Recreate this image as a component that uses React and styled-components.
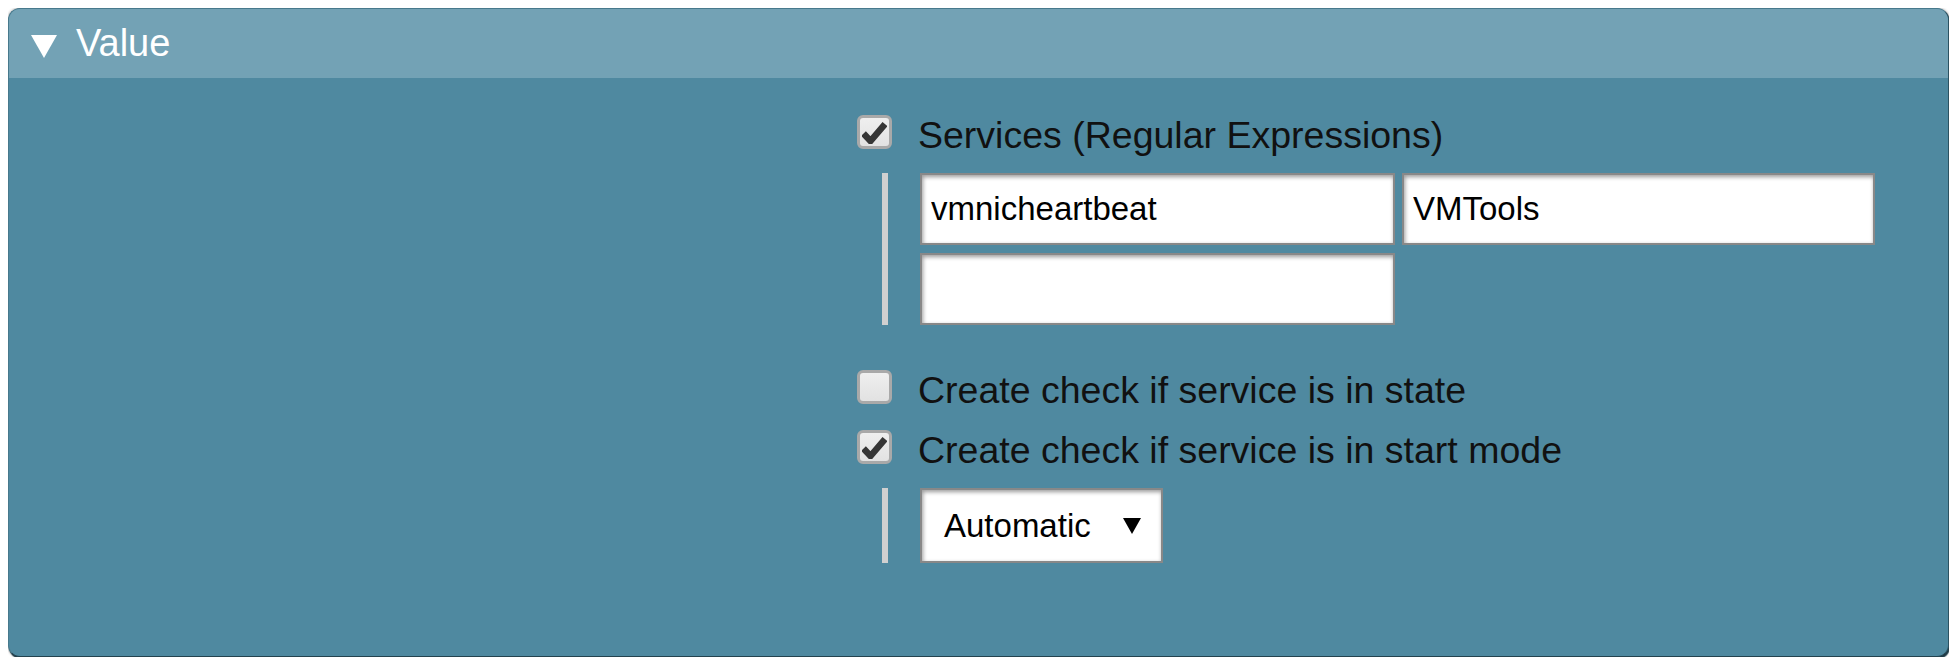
import React from "react";
import styled, { createGlobalStyle } from "styled-components";

const GlobalStyle = createGlobalStyle`
  body {
    margin: 8px;
    background: #ffffff;
    font-family: "Liberation Sans", Arial, sans-serif;
  }
`;

export default function App() {
  return (
    <>
      <GlobalStyle />
      <Panel>
        <Header>
          <svg width="26" height="23" viewBox="0 0 26 23">
            <polygon points="0,0 26,0 13,23" fill="#ffffff" />
          </svg>
          <span>Value</span>
        </Header>
        <Body>
          <Legend />
          <Options>
            <Row>
              <CheckBox checked />
              <Label>Services (Regular Expressions)</Label>
            </Row>
            <Nested>
              <InputGrid>
                <TextInput defaultValue="vmnicheartbeat" />
                <TextInput defaultValue="VMTools" />
                <TextInput defaultValue="" />
              </InputGrid>
            </Nested>

            <Row>
              <CheckBox />
              <Label>Create check if service is in state</Label>
            </Row>

            <Row>
              <CheckBox checked />
              <Label>Create check if service is in start mode</Label>
            </Row>
            <Nested>
              <Select>
                <span>Automatic</span>
                <svg width="18" height="16" viewBox="0 0 18 16">
                  <polygon points="0,0 18,0 9,16" fill="#000000" />
                </svg>
              </Select>
            </Nested>
          </Options>
        </Body>
      </Panel>
    </>
  );
}

function CheckBox({ checked }) {
  return (
    <Box>
      {checked && (
        <svg width="25" height="23" viewBox="0 0 25 23">
          <path d="M1.5 12.5 L8.5 20 L23 3" fill="none" stroke="#363636" strokeWidth="6.5" strokeLinejoin="miter" />
        </svg>
      )}
    </Box>
  );
}

const Panel = styled.section`
  border: 1px solid #47798c;
  border-right-color: #2c5261;
  border-bottom-color: #24434f;
  border-radius: 12px;
  overflow: hidden;
  background: #4f89a0;
  box-shadow: 0 0 3px rgba(0, 0, 0, 0.45), 1px 2px 1px #24434f;
`;

const Header = styled.div`
  height: 69px;
  display: flex;
  align-items: center;
  gap: 19px;
  padding-left: 22px;
  background: #73a2b5;
  color: #ffffff;
  font-size: 38px;
  svg {
    margin-top: 6px;
  }
`;

const Body = styled.div`
  display: grid;
  grid-template-columns: 848px 1fr;
  padding: 37px 0 74px;
`;

const Legend = styled.div``;

const Options = styled.div`
  display: flex;
  flex-direction: column;
  gap: 26px;
  align-items: flex-start;
`;

const Row = styled.label`
  display: flex;
  align-items: center;
  gap: 26px;
  height: 34px;
`;

const Label = styled.span`
  font-size: 37.5px;
  line-height: 34px;
  padding-top: 6px;
  color: #111111;
`;

const Box = styled.span`
  box-sizing: border-box;
  width: 35px;
  height: 34px;
  border: 3px solid #a9a9a9;
  border-radius: 6px;
  background: linear-gradient(#efefef, #e2e2e2);
  display: flex;
  align-items: center;
  justify-content: center;
  svg {
    margin-top: 1px;
  }
`;

const Nested = styled.div`
  margin: -2px 0 19px 25px;
  border-left: 6px solid #d0d0d0;
  padding-left: 32px;
`;

const InputGrid = styled.div`
  display: grid;
  grid-template-columns: 475px 473px;
  gap: 8px 7px;
`;

const TextInput = styled.input`
  box-sizing: border-box;
  height: 72px;
  margin: 0;
  padding: 0 9px;
  border: 2px solid #888888;
  background: #ffffff;
  box-shadow: inset 1px 2px 4px rgba(0, 0, 0, 0.4);
  font-family: "Liberation Sans", Arial, sans-serif;
  font-size: 33px;
  color: #000000;
  outline: none;
`;

const Select = styled.div`
  box-sizing: border-box;
  width: 243px;
  height: 75px;
  display: flex;
  align-items: center;
  justify-content: space-between;
  padding: 0 20px 0 22px;
  border: 2px solid #888888;
  background: #ffffff;
  box-shadow: inset 1px 2px 4px rgba(0, 0, 0, 0.4);
  font-size: 33px;
  color: #000000;
`;
